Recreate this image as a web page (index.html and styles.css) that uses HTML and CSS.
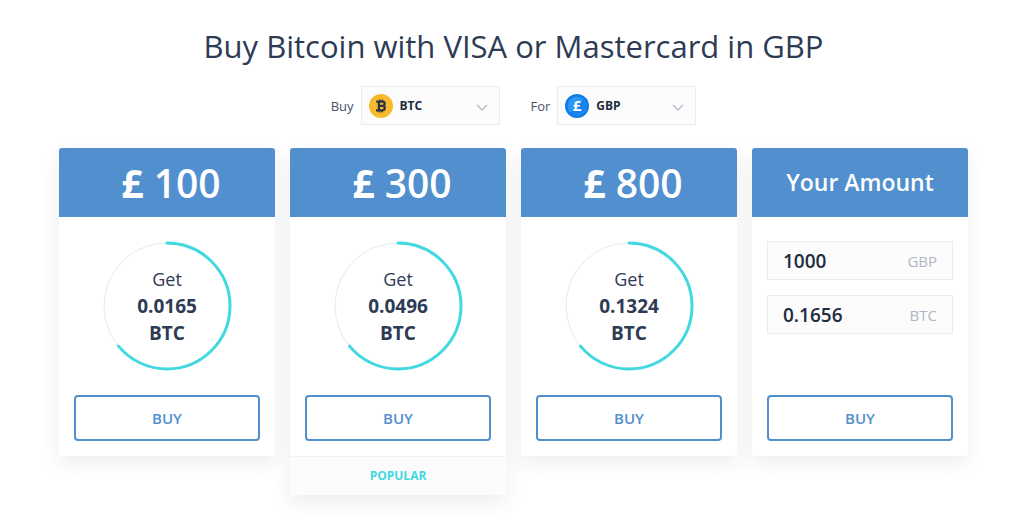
FILE: index.html
```
<!DOCTYPE html>
<html lang="en">
<head>
    <meta charset="UTF-8">
    <meta name="viewport" content="width=device-width, initial-scale=1.0">
    <title>Buy Bitcoin</title>
    <link rel="stylesheet" href="styles.css">
</head>
<body>
    <main class="page">
        <h1 class="title">Buy Bitcoin with VISA or Mastercard in GBP</h1>

        <!-- Currency selectors -->
        <form class="filters">
            <div class="filter">
                <label for="buy-currency">Buy</label>
                <div class="select-box">
                    <svg class="coin" viewBox="0 0 24 24" aria-hidden="true">
                        <circle cx="12" cy="12" r="12" fill="#f6ba2c"/>
                        <g fill="none" stroke="#2b3442" stroke-width="2.200">
                            <path d="M7.200 7.600H13.500a2.100 2.100 0 0 1 0 4.300H9.500M7 16.300H13.600a2.200 2.200 0 0 0 0-4.400M9.900 7.600V16.300"/>
                            <path d="M10.700 5.500V7.500M13.300 5.500V7.500M10.300 16.300V18.500M12.900 16.300V18.500" stroke-width="1.400"/>
                        </g>
                        <path d="M5.500 8h.8M4.800 11.500h.8M5.500 15h.8" stroke="#fbe3a6" stroke-width=".8"/>
                    </svg>
                    <select id="buy-currency">
                        <option>BTC</option>
                        <option>ETH</option>
                    </select>
                    <svg class="arrow" viewBox="0 0 12 7" aria-hidden="true"><path d="M1 1l5 5 5-5"/></svg>
                </div>
            </div>
            <div class="filter">
                <label for="for-currency">For</label>
                <div class="select-box">
                    <svg class="coin" viewBox="0 0 24 24" aria-hidden="true">
                        <circle cx="12" cy="12" r="12" fill="#0f7be6"/>
                        <circle cx="12" cy="12" r="9.500" fill="#2f97f3"/>
                        <path d="M5.300 18.700A9.500 9.500 0 0 0 18.700 5.300z" fill="#1585ee"/>
                        <text class="coin-sign" x="12" y="17">£</text>
                    </svg>
                    <select id="for-currency">
                        <option>GBP</option>
                        <option>USD</option>
                    </select>
                    <svg class="arrow" viewBox="0 0 12 7" aria-hidden="true"><path d="M1 1l5 5 5-5"/></svg>
                </div>
            </div>
        </form>

        <!-- Price cards -->
        <div class="cards">
            <section class="card">
                <h2 class="card-head card-head-price"><b>£</b> 100</h2>
                <div class="card-body">
                    <div class="ring">
                        <svg class="ring-line" viewBox="0 0 130 130" aria-hidden="true">
                            <circle class="track" cx="65" cy="65" r="63"/>
                            <circle class="progress" cx="65" cy="65" r="63" pathLength="100"/>
                        </svg>
                        <p class="amount">Get<strong>0.0165</strong><strong>BTC</strong></p>
                    </div>
                    <button class="button" type="button">BUY</button>
                </div>
            </section>

            <section class="card">
                <h2 class="card-head card-head-price"><b>£</b> 300</h2>
                <div class="card-body">
                    <div class="ring">
                        <svg class="ring-line" viewBox="0 0 130 130" aria-hidden="true">
                            <circle class="track" cx="65" cy="65" r="63"/>
                            <circle class="progress" cx="65" cy="65" r="63" pathLength="100"/>
                        </svg>
                        <p class="amount">Get<strong>0.0496</strong><strong>BTC</strong></p>
                    </div>
                    <button class="button" type="button">BUY</button>
                </div>
                <p class="popular">POPULAR</p>
            </section>

            <section class="card">
                <h2 class="card-head card-head-price"><b>£</b> 800</h2>
                <div class="card-body">
                    <div class="ring">
                        <svg class="ring-line" viewBox="0 0 130 130" aria-hidden="true">
                            <circle class="track" cx="65" cy="65" r="63"/>
                            <circle class="progress" cx="65" cy="65" r="63" pathLength="100"/>
                        </svg>
                        <p class="amount">Get<strong>0.1324</strong><strong>BTC</strong></p>
                    </div>
                    <button class="button" type="button">BUY</button>
                </div>
            </section>

            <section class="card">
                <h2 class="card-head">Your Amount</h2>
                <form class="card-body">
                    <div class="fields">
                        <div class="field">
                            <input id="amount-gbp" type="text" value="1000">
                            <label for="amount-gbp">GBP</label>
                        </div>
                        <div class="field">
                            <input id="amount-btc" type="text" value="0.1656">
                            <label for="amount-btc">BTC</label>
                        </div>
                    </div>
                    <button class="button" type="button">BUY</button>
                </form>
            </section>
        </div>
    </main>
</body>
</html>
```

FILE: styles.css
```
* {
    box-sizing: border-box;
}
body {
    margin: 0;
    font-family: "Open Sans", "Noto Sans", sans-serif;
    color: #2e3b55;
    background-color: #fff;
}
.page {
    padding: 23px 56px 19px 59px;
}
.title {
    margin: 0;
    font-size: 31px;
    line-height: 46px;
    font-weight: 400;
    text-align: center;
}

/* Currency selectors */
.filters {
    display: flex;
    justify-content: center;
    gap: 31px;
    margin: 17px 0 23px;
}
.filter {
    display: flex;
    align-items: center;
    gap: 7px;
    font-size: 13px;
    color: #465169;
}
.select-box {
    position: relative;
    width: 139px;
    height: 39px;
}
.select-box select {
    width: 100%;
    height: 100%;
    padding: 0 30px 0 38px;
    border: 1px solid #ebebeb;
    border-radius: 1px;
    background-color: #fcfcfc;
    color: #222c3f;
    font: 700 12px "Open Sans", sans-serif;
    appearance: none;
    cursor: pointer;
}
.coin {
    position: absolute;
    top: 8px;
    left: 8px;
    width: 24px;
    height: 24px;
    pointer-events: none;
}
.coin-sign {
    fill: #fff;
    font-size: 15px;
    font-weight: 700;
    text-anchor: middle;
}
.arrow {
    position: absolute;
    top: 18px;
    right: 12px;
    width: 12px;
    height: 7px;
    fill: none;
    stroke: #bdc2cd;
    stroke-width: 1.5;
    pointer-events: none;
}

/* Cards */
.cards {
    display: grid;
    grid-template-columns: repeat(4, 1fr);
    align-items: start;
    gap: 15px;
}
.card {
    border-radius: 3px;
    background-color: #fff;
    box-shadow: 0 8px 20px rgba(30, 40, 60, 0.08);
    overflow: hidden;
}
.card-head {
    margin: 0;
    background-color: #528fce;
    color: #fff;
    font-size: 23px;
    line-height: 69px;
    font-weight: 600;
    text-align: center;
}
.card-head-price {
    padding-left: 8px;
    font-size: 39px;
}
.card-head b {
    font-weight: 700;
}
.card-body {
    display: flex;
    flex-direction: column;
    align-items: center;
    gap: 24px;
    padding: 24px 15px 15px;
}
.ring {
    display: grid;
    place-items: center;
    width: 130px;
    height: 130px;
}
.ring > * {
    grid-area: 1 / 1;
}
.ring-line {
    width: 100%;
    height: 100%;
    fill: none;
    transform: rotate(-90deg);
}
.track {
    stroke: #e9e9e9;
    stroke-width: 1;
}
.progress {
    stroke: #42d8e0;
    stroke-width: 3;
    stroke-dasharray: 64 100;
    stroke-linecap: round;
}
.amount {
    margin: 0;
    font-size: 18px;
    line-height: 27px;
    text-align: center;
}
.amount strong {
    display: block;
    font-size: 19px;
    font-weight: 700;
}
.button {
    width: 100%;
    height: 46px;
    border: 2px solid #528fce;
    border-radius: 4px;
    background-color: #fff;
    color: #528fce;
    font: 600 15px "Open Sans", sans-serif;
    cursor: pointer;
}
.button:hover {
    background-color: #528fce;
    color: #fff;
}
.popular {
    margin: 0;
    border-top: 1px solid #f1f1f1;
    background-color: #fcfcfc;
    color: #42d8e0;
    font-size: 12px;
    line-height: 38px;
    font-weight: 700;
    text-align: center;
}

/* Custom amount */
.fields {
    display: flex;
    flex-direction: column;
    gap: 15px;
    width: 100%;
    height: 130px;
}
.field {
    display: flex;
    align-items: center;
    height: 39px;
    padding: 0 15px;
    border: 1px solid #ebebeb;
    background-color: #fcfcfc;
}
.field input {
    flex: 1;
    min-width: 0;
    padding: 0;
    border: none;
    background: none;
    color: #222c3f;
    font: 600 19px "Open Sans", sans-serif;
}
.field label {
    color: #b0b5c3;
    font-size: 15px;
}
```
